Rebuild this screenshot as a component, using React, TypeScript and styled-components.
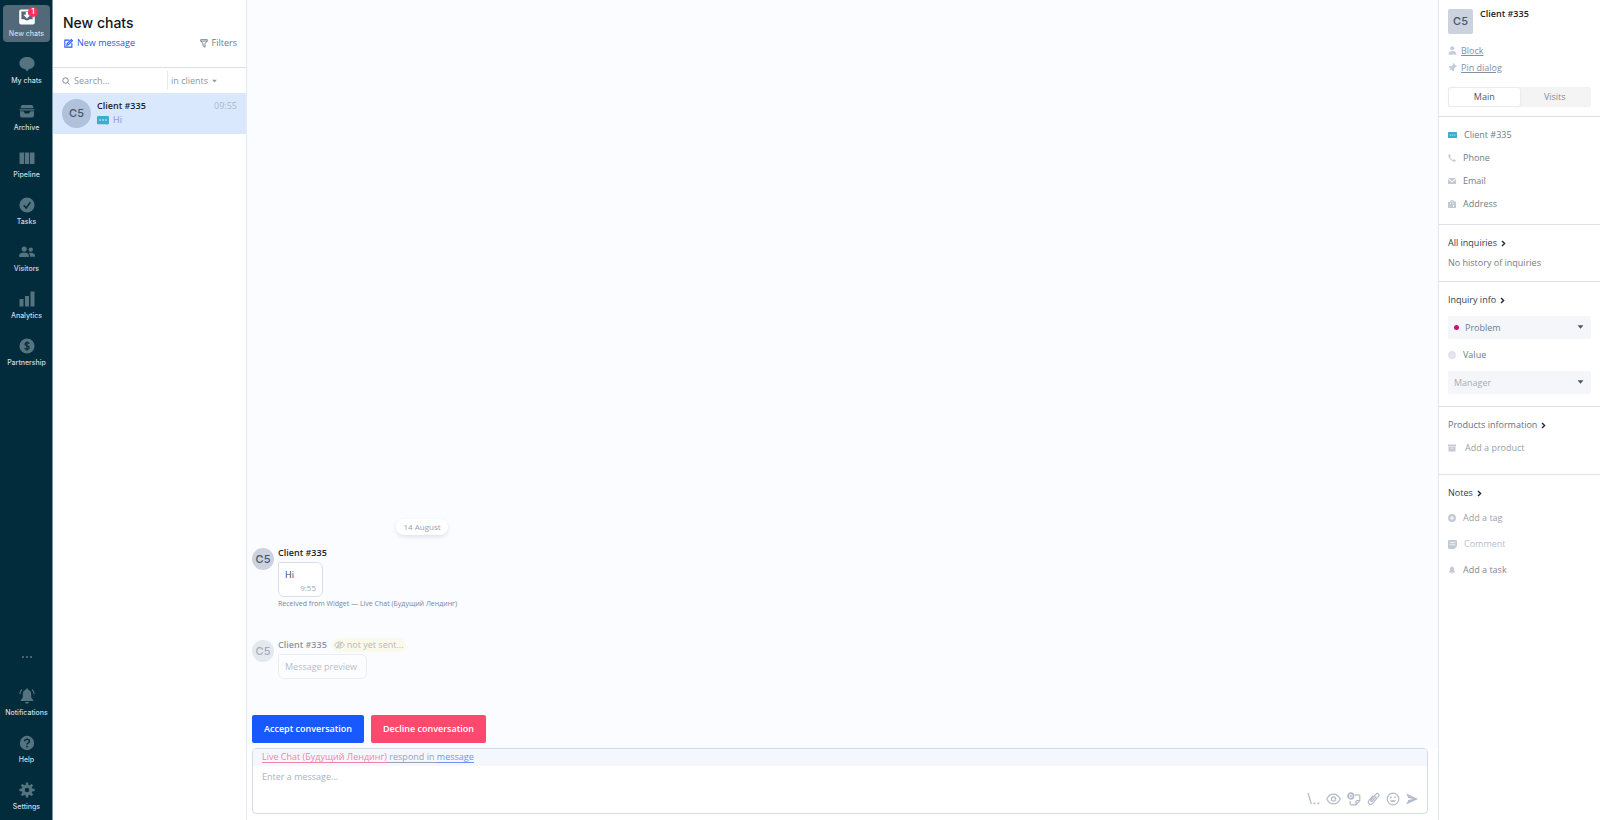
import React from 'react';
import styled, { createGlobalStyle, css } from 'styled-components';

const GlobalStyle = createGlobalStyle`
  *, *::before, *::after { box-sizing: border-box; }
  body {
    margin: 0;
    background: #fff;
    color: #5f6b7c;
    font: 400 9px/16px 'Open Sans', 'Noto Sans', sans-serif;
  }
  button, input, select, textarea {
    margin: 0;
    padding: 0;
    border: 0;
    background: none;
    color: inherit;
    font: inherit;
  }
  button { cursor: pointer; }
  a { color: inherit; text-decoration: none; }
  h1, h2, p { margin: 0; font: inherit; }
  svg { display: block; flex: none; }
`;

const Page = styled.div`
  display: flex;
  min-height: 100vh;
`;

/* ---------- navigation rail ---------- */

const Rail = styled.nav`
  flex: none;
  display: flex;
  flex-direction: column;
  justify-content: space-between;
  width: 53px;
  padding: 5px 2px 5px 3px;
  background: #022b3c;
  border-right: 1px solid #8396a1;
`;

const RailGroup = styled.div`
  display: flex;
  flex-direction: column;
  gap: 10px;
`;

const RailItem = styled.a<{ $active?: boolean }>`
  position: relative;
  display: flex;
  flex-direction: column;
  align-items: center;
  gap: 3px;
  height: 37px;
  width: 47px;
  padding-top: 4px;
  border-radius: 4px;
  color: ${p => (p.$active ? '#fff' : '#567380')};
  background: ${p => (p.$active ? '#52697a' : 'transparent')};
`;

const RailLabel = styled.span`
  font: 500 7px/12px Inter, sans-serif;
  color: #d3dce1;
  white-space: nowrap;
`;

const RailMore = styled.button`
  height: 16px;
  margin-bottom: 9px;
  color: #48636f;
  display: flex;
  align-items: center;
  justify-content: center;
`;

const Badge = styled.span`
  position: absolute;
  top: 2px;
  left: 25px;
  width: 10px;
  height: 10px;
  border-radius: 50%;
  background: #fb2f5c;
  color: #fff;
  font: 600 7px/10px Inter, sans-serif;
  text-align: center;
`;

/* ---------- chat list ---------- */

const ChatList = styled.section`
  flex: none;
  width: 194px;
  background: #fff;
  border-right: 1px solid #e6e9f1;
`;

const ListHeader = styled.header`
  display: flex;
  flex-direction: column;
  gap: 3px;
  padding: 13px 9px 17px 10px;
  border-bottom: 1px solid #dcdfe3;
`;

const Title = styled.h1`
  font: 500 14px/20px Inter, sans-serif;
  color: #10161d;
`;

const HeaderActions = styled.div`
  display: flex;
  justify-content: space-between;
  height: 14px;
  padding-left: 1px;
`;

const TextButton = styled.button<{ $accent?: boolean }>`
  display: flex;
  align-items: center;
  gap: 4px;
  color: ${p => (p.$accent ? '#2457f5' : '#6f7a88')};
  font-weight: ${p => (p.$accent ? 500 : 400)};
`;

const SearchBar = styled.div`
  display: flex;
  align-items: center;
  height: 25px;
  padding: 0 10px 0 9px;
  color: #7c8794;
`;

const SearchInput = styled.input`
  flex: 1;
  min-width: 0;
  height: 19px;
  padding-left: 4px;
  border-right: 1px solid #e8eaee;
  outline: none;
  &::placeholder { color: #8f98a3; opacity: 1; }
`;

const Scope = styled.label`
  flex: none;
  position: relative;
  width: 68px;
  padding-left: 3px;
  display: flex;
  align-items: center;
  color: #8f98a3;
`;

const plainSelect = css`
  appearance: none;
  outline: none;
  cursor: pointer;
`;

const ScopeSelect = styled.select`
  ${plainSelect}
  width: 50px;
  height: 16px;
`;

const ScopeCaret = styled.span`
  position: absolute;
  left: 44px;
  top: 6px;
  pointer-events: none;
`;

const ChatRow = styled.a`
  display: flex;
  gap: 6px;
  height: 41px;
  padding: 6px 9px 0 9px;
  background: #dae8fe;
`;

const Avatar = styled.span<{ $size: number; $square?: boolean; $tone?: string }>`
  flex: none;
  width: ${p => p.$size}px;
  height: ${p => p.$size}px;
  border-radius: ${p => (p.$square ? '2px' : '50%')};
  background: ${p => p.$tone || '#ccd3df'};
  color: #45566a;
  font: 500 11px/${p => p.$size}px Inter, sans-serif;
  text-align: center;
`;

const ChatText = styled.div`
  flex: 1;
  display: flex;
  flex-direction: column;
`;

const ChatLine = styled.div`
  display: flex;
  align-items: center;
  gap: 4px;
  height: 14px;
  color: #8494a8;
`;

const Name = styled.strong`
  font-weight: 600;
  color: #1a222c;
`;

const Time = styled.time`
  margin-left: auto;
  color: #abb8ca;
`;

/* ---------- conversation ---------- */

const Conversation = styled.main`
  flex: 1;
  min-width: 0;
  display: flex;
  flex-direction: column;
  background: #fbfcff;
`;

const Feed = styled.div`
  flex: 1;
  display: flex;
  flex-direction: column;
  justify-content: flex-end;
  padding: 0 5px 36px;
`;

const DateRow = styled.div`
  display: flex;
  justify-content: center;
  max-width: 340px;
  margin-bottom: 11px;
`;

const DatePill = styled.time`
  padding: 0 7px;
  border-radius: 8px;
  background: #fff;
  box-shadow: 0 2px 4px rgba(60, 80, 110, 0.14);
  font-size: 8px;
  color: #97a1af;
`;

const Message = styled.article<{ $faded?: boolean }>`
  display: flex;
  align-items: flex-start;
  gap: 4px;
  margin-top: ${p => (p.$faded ? '30px' : 0)};
  opacity: ${p => (p.$faded ? 0.48 : 1)};
  > ${Avatar} { margin-top: 2px; }
`;

const MessageBody = styled.div`
  display: flex;
  flex-direction: column;
  align-items: flex-start;
  gap: 2px;
`;

const MessageHead = styled.header`
  display: flex;
  align-items: center;
  gap: 5px;
  height: 14px;
`;

const Pending = styled.span`
  display: flex;
  align-items: center;
  gap: 2px;
  height: 14px;
  padding: 0 2px;
  border-radius: 7px;
  background: #fcf7d2;
  color: #636d78;
`;

const Bubble = styled.div`
  display: flex;
  flex-direction: column;
  min-width: 45px;
  padding: 4px 6px 1px;
  border: 1px solid #d9dfea;
  border-radius: 1px 6px 6px 6px;
  background: #fff;
  color: #323d4b;
`;

const PreviewBubble = styled(Bubble)`
  padding: 4px 9px 3px 6px;
  color: #6b7684;
`;

const BubbleTime = styled.time`
  align-self: flex-end;
  height: 12px;
  line-height: 10px;
  font-size: 8px;
  color: #a2acb9;
`;

const Source = styled.p`
  font-size: 7px;
  line-height: 9px;
  color: #7585a5;
`;

const Actions = styled.div`
  display: flex;
  gap: 7px;
  padding: 0 5px 5px;
`;

const ActionButton = styled.button<{ $tone: string }>`
  height: 28px;
  padding: 0 12px;
  border-radius: 2px;
  background: ${p => p.$tone};
  color: #fff;
  font-weight: 600;
`;

const Composer = styled.footer`
  padding: 0 10px 6px 5px;
  background: #fff;
`;

const Editor = styled.form`
  display: flex;
  flex-direction: column;
  height: 66px;
  border: 1px solid #d3dae4;
  border-radius: 4px;
  overflow: hidden;
`;

const ReplyBar = styled.div`
  display: flex;
  align-items: center;
  height: 17px;
  padding-left: 9px;
  background: #f4f8fe;
  line-height: 10px;
`;

const ReplyPart = styled.a<{ $tone: string }>`
  border-bottom: 1px solid ${p => p.$tone};
  color: ${p => p.$tone};
  white-space: pre;
`;

const MessageInput = styled.textarea`
  flex: 1;
  min-height: 0;
  padding: 3px 9px;
  resize: none;
  outline: none;
  &::placeholder { color: #aab3c0; opacity: 1; }
`;

const Tools = styled.div`
  display: flex;
  justify-content: flex-end;
  align-items: center;
  gap: 6px;
  height: 18px;
  margin-bottom: 5px;
  padding-right: 9px;
  color: #b3bbc8;
`;

const ToolButton = styled.button`
  display: flex;
`;

/* ---------- client panel ---------- */

const Panel = styled.aside`
  flex: none;
  width: 162px;
  background: #fff;
  border-left: 1px solid #e1e5ee;
`;

const Section = styled.section<{ $pad: string; $last?: boolean }>`
  padding: ${p => p.$pad};
  border-bottom: ${p => (p.$last ? 0 : '1px solid #dfe2ea')};
`;

const Identity = styled.div`
  display: flex;
  gap: 7px;
  margin-bottom: 8px;
  line-height: 10px;
`;

const PanelLink = styled.a`
  display: flex;
  align-items: center;
  gap: 4px;
  height: 17px;
  color: #8290a4;
  text-decoration: underline;
  svg { color: #c6ccd6; }
`;

const Tabs = styled.div`
  display: flex;
  height: 20px;
  margin-top: 11px;
  border: 1px solid #f2f3f5;
  border-radius: 2px;
  background: #f4f4f5;
`;

const Tab = styled.button<{ $active?: boolean }>`
  flex: 1;
  border-radius: 2px;
  background: ${p => (p.$active ? '#fff' : 'transparent')};
  box-shadow: ${p => (p.$active ? '0 0 2px rgba(60, 70, 90, 0.18)' : 'none')};
  color: ${p => (p.$active ? '#4d5763' : '#868d96')};
`;

const Field = styled.label<{ $height: number }>`
  display: flex;
  align-items: center;
  gap: 7px;
  height: ${p => p.$height}px;
  color: #c3cad4;
`;

const FieldInput = styled.input<{ $tone?: string }>`
  flex: 1;
  min-width: 0;
  height: 16px;
  outline: none;
  color: #727b86;
  &::placeholder { color: ${p => p.$tone || '#727b86'}; opacity: 1; }
`;

const SectionTitle = styled.h2`
  display: flex;
  align-items: center;
  gap: 4px;
  height: 16px;
  font-weight: 500;
  color: ${p => p.color || '#333e4b'};
  svg { color: #1f2a37; }
`;

const Stack = styled.div<{ $gap: number }>`
  display: flex;
  flex-direction: column;
  gap: ${p => p.$gap}px;
`;

const Muted = styled.p`
  color: #737c88;
`;

const SelectBox = styled.label`
  position: relative;
  display: flex;
  align-items: center;
  height: 23px;
  border-radius: 2px;
  background: #f4f6f9;
`;

const PanelSelect = styled.select<{ $dotted?: boolean }>`
  ${plainSelect}
  width: 100%;
  height: 23px;
  padding-left: ${p => (p.$dotted ? '17px' : '6px')};
  color: ${p => (p.$dotted ? '#6d7f92' : '#a6adb6')};
`;

const SelectCaret = styled.span`
  position: absolute;
  right: 7px;
  top: 9px;
  color: #4c5866;
  pointer-events: none;
`;

const StatusDot = styled.span`
  position: absolute;
  left: 6px;
  top: 9px;
  width: 5px;
  height: 5px;
  border-radius: 50%;
  background: #c8107c;
`;

const AddButton = styled.button`
  display: flex;
  align-items: center;
  gap: 9px;
  height: 16px;
  color: #989fa8;
  svg { color: #c3cad4; }
`;

const TaskButton = styled.button<{ $tone: string }>`
  display: flex;
  align-items: center;
  gap: 7px;
  height: 26px;
  color: ${p => p.$tone};
  svg { color: #c3cad4; }
`;

/* ---------- icons ---------- */

type IconProps = { w?: number; h?: number; box?: string; children: React.ReactNode };
const Icon = ({ w = 16, h = w, box = '0 0 16 16', children }: IconProps) => (
  <svg width={w} height={h} viewBox={box} fill="currentColor" aria-hidden="true">{children}</svg>
);

const Inbox = () => (
  <Icon><path fillRule="evenodd" d="M2 .5h12A1.8 1.8 0 0 1 15.800 2.300v11.400A1.800 1.800 0 0 1 14 15.500H2A1.800 1.800 0 0 1 .2 13.700V2.300A1.800 1.800 0 0 1 2 .5Zm.4 2v7.800h3.100c.5 1.500 4.500 1.500 5 0h3.100V2.500Z" /><path d="M6.700 3h2.600v2.800h2.300L8 9.500 4.400 5.800h2.300Z" /></Icon>
);
const Chat = () => <Icon><path d="M8 1c4.400 0 7.600 2.600 7.600 6.200 0 3.300-2.400 5.300-5.500 5.900L8 15.400l-2-2.300C2.800 12.500.4 10.400.4 7.200.4 3.600 3.600 1 8 1Z" /></Icon>;
const Archive = () => (
  <Icon><path d="M3.500 2h9c.8 0 1.300.5 1.500 1.300l.5 2h-13l.5-2C2.200 2.500 2.700 2 3.500 2Z" /><path d="M.5 6.200h15v1.200h-15ZM1 8.200h3.400l1.700 2.300h3.800l1.700-2.300H15v4.400a1.800 1.800 0 0 1-1.800 1.800H2.800A1.800 1.800 0 0 1 1 12.600Z" /></Icon>
);
const Pipeline = () => <Icon><path d="M.5 2.500h4.500v11.500H.5ZM5.800 2.500h4.400v11.500H5.800ZM11 2.500h4.500v11.500H11Z" /></Icon>;
const Tasks = () => <Icon><circle cx="8" cy="8" r="7.600" /><path d="m4.700 8.200 2.500 2.800 4.200-5.800" fill="none" stroke="#022b3c" strokeWidth="1.500" /></Icon>;
const Visitors = () => (
  <Icon><circle cx="5.200" cy="5" r="2.600" /><circle cx="11.800" cy="5.600" r="2.200" /><path d="M.2 13v-1.700C.2 9.500 2.400 8.600 5 8.600s4.800.9 4.800 2.700V13ZM10.900 12.700v-1.600c0-.9-.4-1.600-1-2.100 2.800-.8 6 .1 6 2.100v1.600Z" /></Icon>
);
const Analytics = () => <Icon><path d="M.5 8h4v7.500h-4ZM6 5h4v10.500H6ZM11.500.5h4v15h-4Z" /></Icon>;
const Dollar = () => <Icon><circle cx="8" cy="8" r="7.600" /><path d="M10.300 5.700C9.600 4.300 6 4.300 6 6.200 6 8.300 10.300 7.500 10.300 9.800c0 2-3.900 2-4.700.3M8 3.200v9.600" fill="none" stroke="#022b3c" strokeWidth="1.200" /></Icon>;
const Bell = ({ size = 16, rings = true }: { size?: number; rings?: boolean }) => (
  <Icon w={size}><path d="M8 .5c.8 0 1.200.5 1.200 1.300 2 .6 3 2.200 3 4.400v3.400l2 2.400v1H1.800v-1l2-2.400V6.200c0-2.200 1-3.800 3-4.400C6.800 1 7.200.5 8 .5ZM6 14h4c-.3 2-3.700 2-4 0Z" />{rings && <path d="M3 1.500C1.500 2.700.8 4.300.8 6.300M13 1.500c1.500 1.200 2.200 2.800 2.200 4.800" fill="none" stroke="currentColor" strokeWidth="1.200" />}</Icon>
);
const Help = () => <Icon><circle cx="8" cy="8" r="7.200" /><path d="M5.700 6.300C5.800 3.500 10.400 3.600 10.400 6.200 10.400 7.800 8 7.800 8 9.600M8 10.800v1.700" fill="none" stroke="#022b3c" strokeWidth="1.600" /></Icon>;
const Gear = () => (
  <Icon><circle cx="8" cy="8" r="3.900" fill="none" stroke="currentColor" strokeWidth="3.200" /><path d="M8 .4v3M8 12.600v3M.4 8h3M12.600 8h3M2.600 2.600l2 2M11.400 11.400l2 2M2.600 13.400l2-2M11.400 4.600l2-2" stroke="currentColor" strokeWidth="2.500" /></Icon>
);
const Compose = () => <Icon w={9}><g fill="none" stroke="currentColor" strokeWidth="1.900"><path d="M9.500 2H1.500v12.500h12.500V7" /><path d="m5 11 .7-3L13 1l2 2-7.300 7.300Z" /></g></Icon>;
const Funnel = () => <Icon w={8} h={9} box="0 0 14 16"><path d="M1 1.200h12v2L8.800 8v6.500l-3.600-2.300V8L1 3.200ZM1 3.800h12" fill="none" stroke="currentColor" strokeWidth="1.600" /></Icon>;
const Magnifier = () => <Icon w={8}><g fill="none" stroke="currentColor" strokeWidth="2"><circle cx="7" cy="7" r="5.500" /><path d="m11 11 4.200 4.200" /></g></Icon>;
const Caret = ({ w = 5 }: { w?: number }) => <Icon w={w} h={4} box="0 0 8 5"><path d="M.3.3h7.400L4 4.700Z" /></Icon>;
const Chevron = () => <Icon w={5} h={7} box="0 0 5 7"><path d="m1 1 2.600 2.500L1 6" fill="none" stroke="currentColor" strokeWidth="1.400" /></Icon>;
const WidgetIcon = ({ w = 12 }: { w?: number }) => (
  <Icon w={w} h={w * 0.75} box="0 0 12 9"><path d="M1 0h10a1 1 0 0 1 1 1v6.200a1 1 0 0 1-1 1h-.7V9L9 8.200H1a1 1 0 0 1-1-1V1a1 1 0 0 1 1-1Z" fill="#3dadcf" /><g fill="#e8f8fc"><circle cx="3" cy="4" r=".8" /><circle cx="6" cy="4" r=".8" /><circle cx="9" cy="4" r=".8" /></g></Icon>
);
const EyeOff = () => <Icon w={11} h={8} box="0 0 22 16"><g fill="none" stroke="currentColor" strokeWidth="1.600"><path d="M1 8c5-8 15-8 20 0-5 8-15 8-20 0Z" /><circle cx="11" cy="8" r="3.200" /><path d="M4 14.500 18 1.500" /></g></Icon>;
const BlockIcon = () => <Icon w={9}><circle cx="7.500" cy="4" r="3.600" /><path d="M1 15.500c0-4.500 2-6.700 6.500-6.700s4.500 1 5 2c-2 0-3.500 1.500-3 4.700ZM12.500 10.800a2.500 2.500 0 1 1 0 5 2.500 2.500 0 0 1 0-5Z" /></Icon>;
const PinIcon = () => <Icon w={9}><path d="m9.500 0 6.500 6.500-1.800 1-.9-.5-2.800 3 .4 3.500-1.700 1.300L5.400 11.200.3 16 4.600 10.300 1.200 7l1.500-1.700 3.400.3L9 2.800l-.5-1.300Z" /></Icon>;
const PhoneIcon = () => <Icon w={8}><path d="M1 1.500C3-.5 4-.3 5.500 4L4.200 5.800c1 2.700 3.200 5 6 6L12 10.500c4 1.500 4.300 2.500 2.500 4.500C10 17.500-1.500 7 1 1.500Z" /></Icon>;
const MailIcon = () => <Icon w={8}><path d="M0 2h16L8 8.500ZM0 4.300l8 6.200 8-6.200V14H0Z" /></Icon>;
const AddressIcon = () => <Icon w={8}><path fillRule="evenodd" d="M5 0h6v3h5v13H0V4h5Zm1.500 1.500V3h3V1.500ZM4 6.500V8h2V6.500Zm5 0V8h2V6.500ZM10 10.500V14h2v-3.500Z" /></Icon>;
const ValueIcon = () => <Icon w={8}><circle cx="8" cy="8" r="7.800" fill="#dfe3e9" /><path d="M5 9.500c2 2 4.500.8 6-3.500" fill="none" stroke="#f7f8fa" strokeWidth="1.600" /></Icon>;
const BoxIcon = () => <Icon w={8}><path fillRule="evenodd" d="M0 1h16v4H0ZM1 6h14v9H1Zm4 1.500V9h6V7.500Z" /></Icon>;
const PlusIcon = () => <Icon w={8}><circle cx="8" cy="8" r="7.800" /><path d="M8 4v8M4 8h8" stroke="#fff" strokeWidth="2" /></Icon>;
const CommentIcon = () => <Icon w={9}><path fillRule="evenodd" d="M2 0h12a2 2 0 0 1 2 2v9l-5 5H2a2 2 0 0 1-2-2V2a2 2 0 0 1 2-2Zm1 4v1.500h10V4Zm0 4v1.500h10V8Z" /></Icon>;

const line = { fill: 'none', stroke: 'currentColor', strokeWidth: 1.2 };
const TemplateIcon = () => <Icon w={13} h={14} box="0 0 13 14"><path d="m1 1 3.300 11" {...line} /><path d="M6.500 10.500h1.800v1.800H6.500ZM10.500 10.500h1.800v1.800h-1.800Z" /></Icon>;
const EyeIcon = () => <Icon w={15} h={12} box="0 0 15 12"><g {...line}><path d="M.8 6C4-.5 11-.5 14.200 6 11 12.500 4 12.500.8 6Z" /><circle cx="7.500" cy="6" r="2.100" /></g></Icon>;
const StickerIcon = () => <Icon w={14} h={14} box="0 0 14 14"><path d="M8 2.800h3.600a1.200 1.200 0 0 1 1.200 1.200v4.500L9 12.800H4.300a1.200 1.200 0 0 1-1.200-1.200V9M12.700 8.500H10a1 1 0 0 0-1 1v3.200" {...line} /><circle cx="3.800" cy="4" r="2.800" fill="none" stroke="currentColor" strokeWidth="1.800" /><path d="M3.800 2.800v2.400M2.600 4H5" stroke="currentColor" strokeWidth="1" /></Icon>;
const ClipIcon = () => <Icon w={13} h={14} box="0 0 13 14"><path d="M9.300 4.300 5.300 9c-.9 1-2-.1-1.200-1.100L9 2.200c1.600-1.700 4 .3 2.500 2.200l-5.800 7C3.400 14.200-.3 11.300 1.900 8.500L6 3.600" {...line} /></Icon>;
const SmileIcon = () => <Icon w={14} h={14} box="0 0 14 14"><circle cx="7" cy="7" r="5.800" {...line} /><path d="M4 8.200c1 2.600 5 2.600 6 0Z" /><circle cx="5" cy="5.400" r=".9" /><circle cx="9" cy="5.400" r=".9" /></Icon>;
const SendIcon = () => <Icon w={12} h={12} box="0 0 12 12"><path d="M.2.500 12 6 .2 11.500 2.300 7 7.500 6 2.300 5Z" /></Icon>;

/* ---------- data ---------- */

const topNav = [
  { label: 'New chats', icon: <Inbox />, badge: '1' },
  { label: 'My chats', icon: <Chat /> },
  { label: 'Archive', icon: <Archive /> },
  { label: 'Pipeline', icon: <Pipeline /> },
  { label: 'Tasks', icon: <Tasks /> },
  { label: 'Visitors', icon: <Visitors /> },
  { label: 'Analytics', icon: <Analytics /> },
  { label: 'Partnership', icon: <Dollar /> },
];

const bottomNav = [
  { label: 'Notifications', icon: <Bell /> },
  { label: 'Help', icon: <Help /> },
  { label: 'Settings', icon: <Gear /> },
];

const tools = [
  { label: 'Templates', icon: <TemplateIcon /> },
  { label: 'Preview', icon: <EyeIcon /> },
  { label: 'Stickers', icon: <StickerIcon /> },
  { label: 'Attach a file', icon: <ClipIcon /> },
  { label: 'Emoji', icon: <SmileIcon /> },
  { label: 'Send', icon: <SendIcon /> },
];

const contacts = [
  { label: 'Phone', icon: <PhoneIcon /> },
  { label: 'Email', icon: <MailIcon /> },
  { label: 'Address', icon: <AddressIcon /> },
];

export default function App() {
  return (
    <Page>
      <GlobalStyle />
      <Rail>
        <RailGroup>
          {topNav.map(n => (
            <RailItem key={n.label} href="#" $active={!!n.badge}>
              {n.icon}
              <RailLabel>{n.label}</RailLabel>
              {n.badge && <Badge>{n.badge}</Badge>}
            </RailItem>
          ))}
        </RailGroup>
        <RailGroup>
          <RailMore aria-label="More">
            <Icon w={12} h={2} box="0 0 12 2"><path d="M1 0h2v2H1ZM5 0h2v2H5ZM9 0h2v2H9Z" /></Icon>
          </RailMore>
          {bottomNav.map(n => (
            <RailItem key={n.label} href="#">
              {n.icon}
              <RailLabel>{n.label}</RailLabel>
            </RailItem>
          ))}
        </RailGroup>
      </Rail>

      <ChatList>
        <ListHeader>
          <Title>New chats</Title>
          <HeaderActions>
            <TextButton $accent><Compose />New message</TextButton>
            <TextButton><Funnel />Filters</TextButton>
          </HeaderActions>
        </ListHeader>
        <SearchBar>
          <Magnifier />
          <SearchInput aria-label="Search" placeholder="Search..." />
          <Scope>
            <ScopeSelect aria-label="Search scope"><option>in clients</option></ScopeSelect>
            <ScopeCaret><Caret /></ScopeCaret>
          </Scope>
        </SearchBar>
        <ChatRow href="#">
          <Avatar $size={29} $tone="#b0c1dc">C5</Avatar>
          <ChatText>
            <ChatLine><Name>Client #335</Name><Time>09:55</Time></ChatLine>
            <ChatLine><WidgetIcon />Hi</ChatLine>
          </ChatText>
        </ChatRow>
      </ChatList>

      <Conversation>
        <Feed>
          <DateRow><DatePill>14 August</DatePill></DateRow>
          <Message>
            <Avatar $size={22}>C5</Avatar>
            <MessageBody>
              <MessageHead><Name>Client #335</Name></MessageHead>
              <Bubble>Hi<BubbleTime>9:55</BubbleTime></Bubble>
              <Source>Received from Widget — Live Chat (Будущий Лендинг)</Source>
            </MessageBody>
          </Message>
          <Message $faded>
            <Avatar $size={22}>C5</Avatar>
            <MessageBody>
              <MessageHead>
                <Name>Client #335</Name>
                <Pending><EyeOff />not yet sent...</Pending>
              </MessageHead>
              <PreviewBubble>Message preview</PreviewBubble>
            </MessageBody>
          </Message>
        </Feed>
        <Actions>
          <ActionButton $tone="#1858ff">Accept conversation</ActionButton>
          <ActionButton $tone="#fe496f">Decline conversation</ActionButton>
        </Actions>
        <Composer>
          <Editor>
            <ReplyBar>
              <ReplyPart href="#" $tone="#f5849d">Live Chat (Будущий Лендинг)</ReplyPart>
              <ReplyPart as="span" $tone="#99a2ae"> respond in </ReplyPart>
              <ReplyPart href="#" $tone="#7491f3">message</ReplyPart>
            </ReplyBar>
            <MessageInput aria-label="Message" placeholder="Enter a message..." />
            <Tools>
              {tools.map(t => <ToolButton key={t.label} type="button" aria-label={t.label}>{t.icon}</ToolButton>)}
            </Tools>
          </Editor>
        </Composer>
      </Conversation>

      <Panel>
        <Section $pad="9px">
          <Identity>
            <Avatar $size={25} $square>C5</Avatar>
            <Name>Client #335</Name>
          </Identity>
          <PanelLink href="#"><BlockIcon />Block</PanelLink>
          <PanelLink href="#"><PinIcon />Pin dialog</PanelLink>
          <Tabs role="tablist">
            <Tab role="tab" aria-selected="true" $active>Main</Tab>
            <Tab role="tab" aria-selected="false">Visits</Tab>
          </Tabs>
        </Section>

        <Section $pad="7px 9px 9px">
          <Field $height={22}><WidgetIcon w={9} /><FieldInput aria-label="Client name" defaultValue="Client #335" /></Field>
          {contacts.map(c => (
            <Field key={c.label} $height={23}>{c.icon}<FieldInput aria-label={c.label} placeholder={c.label} /></Field>
          ))}
        </Section>

        <Section $pad="10px 9px">
          <Stack $gap={4}>
            <SectionTitle>All inquiries <Chevron /></SectionTitle>
            <Muted>No history of inquiries</Muted>
          </Stack>
        </Section>

        <Section $pad="10px 9px 12px">
          <Stack $gap={8}>
            <SectionTitle>Inquiry info <Chevron /></SectionTitle>
            <SelectBox>
              <StatusDot />
              <PanelSelect $dotted aria-label="Inquiry status"><option>Problem</option></PanelSelect>
              <SelectCaret><Caret w={7} /></SelectCaret>
            </SelectBox>
            <Field $height={16}><ValueIcon /><FieldInput aria-label="Value" placeholder="Value" /></Field>
            <SelectBox>
              <PanelSelect aria-label="Manager"><option>Manager</option></PanelSelect>
              <SelectCaret><Caret w={7} /></SelectCaret>
            </SelectBox>
          </Stack>
        </Section>

        <Section $pad="10px 9px 18px">
          <Stack $gap={7}>
            <SectionTitle color="#5d728a">Products information <Chevron /></SectionTitle>
            <AddButton><BoxIcon />Add a product</AddButton>
          </Stack>
        </Section>

        <Section $pad="10px 9px" $last>
          <Stack $gap={4}>
            <SectionTitle>Notes <Chevron /></SectionTitle>
            <div>
              <TaskButton $tone="#989fa8"><PlusIcon />Add a tag</TaskButton>
              <Field $height={26}><CommentIcon /><FieldInput aria-label="Comment" placeholder="Comment" $tone="#b4bfd0" /></Field>
              <TaskButton $tone="#818992"><Bell size={8} rings={false} />Add a task</TaskButton>
            </div>
          </Stack>
        </Section>
      </Panel>
    </Page>
  );
}
